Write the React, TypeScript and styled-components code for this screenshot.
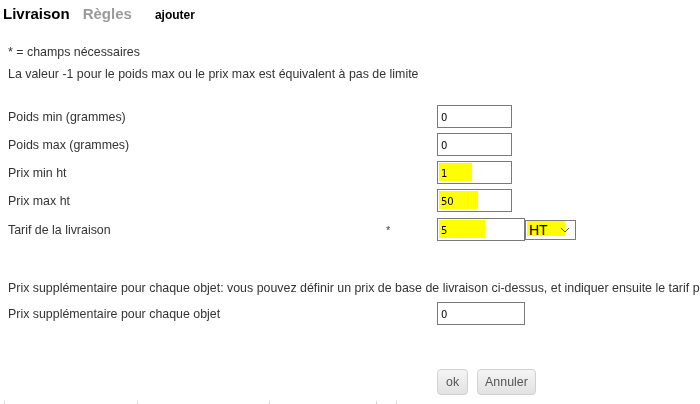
import React from 'react';
import styled, { createGlobalStyle } from 'styled-components';

const GlobalStyle = createGlobalStyle`
  html, body {
    margin: 0;
    padding: 0;
    background: #fff;
    overflow: hidden;
  }
  body {
    font-family: Arial, "Liberation Sans", sans-serif;
    font-size: 12.4px;
    color: #333;
  }
`;

type Row = {
  label: string;
  value: string;
  required?: boolean;
  wide?: boolean;
  mark?: number;
  unit?: boolean;
};

const rows: Row[] = [
  { label: 'Poids min (grammes)', value: '0' },
  { label: 'Poids max (grammes)', value: '0' },
  { label: 'Prix min ht', value: '1', mark: 33 },
  { label: 'Prix max ht', value: '50', mark: 39 },
  { label: 'Tarif de la livraison', value: '5', required: true, wide: true, mark: 46, unit: true },
];

const App: React.FC = () => {
  return (
    <Page>
      <GlobalStyle />
      <Tabs>
        <Tab>Livraison</Tab>
        <Tab $muted>Règles</Tab>
        <AddLink>ajouter</AddLink>
      </Tabs>

      <Note $first>* = champs nécessaires</Note>
      <Note>La valeur -1 pour le poids max ou le prix max est équivalent à pas de limite</Note>

      <Form>
        {rows.map((row) => (
          <FormRow key={row.label} $tall={row.unit}>
            <Label>{row.label}</Label>
            <Star>{row.required ? '*' : ''}</Star>
            <Field>
              <InputWrap>
                <Input defaultValue={row.value} $wide={row.wide} />
                {row.mark ? <Highlight style={{ width: row.mark }} /> : null}
              </InputWrap>
              {row.unit && (
                <InputWrap>
                  <SelectBox>
                    HT
                    <svg width="10" height="6" viewBox="0 0 10 6">
                      <path d="M1 1l4 4 4-4" fill="none" stroke="#555" strokeWidth="1" />
                    </svg>
                  </SelectBox>
                  <Highlight style={{ width: 38, height: 15, top: 1, left: 2 }} />
                </InputWrap>
              )}
            </Field>
          </FormRow>
        ))}
      </Form>

      <LongNote>
        Prix supplémentaire pour chaque objet: vous pouvez définir un prix de base de livraison ci-dessus, et indiquer
        ensuite le tarif pour chaque objet supplémentaire
      </LongNote>

      <FormRow>
        <Label>Prix supplémentaire pour chaque objet</Label>
        <Star />
        <Field>
          <Input defaultValue="0" $wide />
        </Field>
      </FormRow>

      <Actions>
        <Button $small>ok</Button>
        <Button>Annuler</Button>
      </Actions>

      <NextTable>
        <Cell style={{ width: 132 }} />
        <Cell style={{ width: 131 }} />
        <Cell style={{ width: 106 }} />
        <Cell style={{ width: 19 }} />
        <Cell style={{ width: 200 }} />
      </NextTable>
    </Page>
  );
};

const Page = styled.div`
  width: 700px;
  height: 404px;
  overflow: hidden;
`;

const Tabs = styled.div`
  display: flex;
  align-items: baseline;
  padding: 5px 0 0 3px;
  height: 23px;
`;

const Tab = styled.span<{ $muted?: boolean }>`
  font-size: 15px;
  font-weight: bold;
  color: ${(p) => (p.$muted ? '#9a9a9a' : '#000')};
  margin-right: ${(p) => (p.$muted ? '23px' : '13px')};
`;

const AddLink = styled.span`
  font-size: 12px;
  font-weight: bold;
  color: #000;
`;

const Note = styled.div<{ $first?: boolean }>`
  padding-left: 8px;
  line-height: 22px;
  margin-top: ${(p) => (p.$first ? '13px' : '0')};
`;

const Form = styled.div`
  margin-top: 20px;
  display: flex;
  flex-direction: column;
  gap: 5px;
`;

const FormRow = styled.div<{ $tall?: boolean }>`
  display: grid;
  grid-template-columns: 378px 51px 1fr;
  align-items: center;
  padding-left: 8px;
  height: 23px;
  margin-top: ${(p) => (p.$tall ? '1px' : '0')};
`;

const Label = styled.span`
  white-space: nowrap;
`;

const Star = styled.span`
  font-size: 11px;
  color: #444;
`;

const Field = styled.div`
  display: flex;
  align-items: center;
`;

const InputWrap = styled.div`
  position: relative;
  display: flex;
`;

const Input = styled.input<{ $wide?: boolean }>`
  box-sizing: border-box;
  width: ${(p) => (p.$wide ? '88px' : '75px')};
  height: 23px;
  border: 1px solid #7a7a7a;
  border-radius: 0;
  padding: 2px 3px 0;
  font-family: Verdana, "DejaVu Sans", sans-serif;
  font-size: 10px;
  color: #000;
  background: #fff;
  outline: none;
`;

const Highlight = styled.span`
  position: absolute;
  left: 2px;
  top: 2px;
  height: 18px;
  background: #ffff00;
  mix-blend-mode: multiply;
  pointer-events: none;
`;

const SelectBox = styled.div`
  box-sizing: border-box;
  width: 51px;
  height: 20px;
  border: 1px solid #7a7a7a;
  display: flex;
  align-items: center;
  justify-content: space-between;
  padding: 0 5px 0 3px;
  font-size: 14px;
  color: #000;
  background: #fff;
`;

const LongNote = styled.div`
  margin-top: 39px;
  padding-left: 8px;
  white-space: nowrap;
  line-height: 16px;
  margin-bottom: 6px;
`;

const Actions = styled.div`
  margin-top: 44px;
  padding-left: 437px;
  display: flex;
  gap: 9px;
`;

const Button = styled.button<{ $small?: boolean }>`
  height: 26px;
  padding: 0 ${(p) => (p.$small ? '8px' : '7px')};
  border: 1px solid #d0d0d0;
  border-radius: 4px;
  background: linear-gradient(#f4f4f4, #e2e2e2);
  color: #555;
  font-family: Arial, "Liberation Sans", sans-serif;
  font-size: 12.4px;
`;

const NextTable = styled.div`
  margin-top: 6px;
  padding-left: 4px;
  display: flex;
  height: 10px;
`;

const Cell = styled.div`
  border-left: 1px solid #d8d8d8;
`;

export default App;
